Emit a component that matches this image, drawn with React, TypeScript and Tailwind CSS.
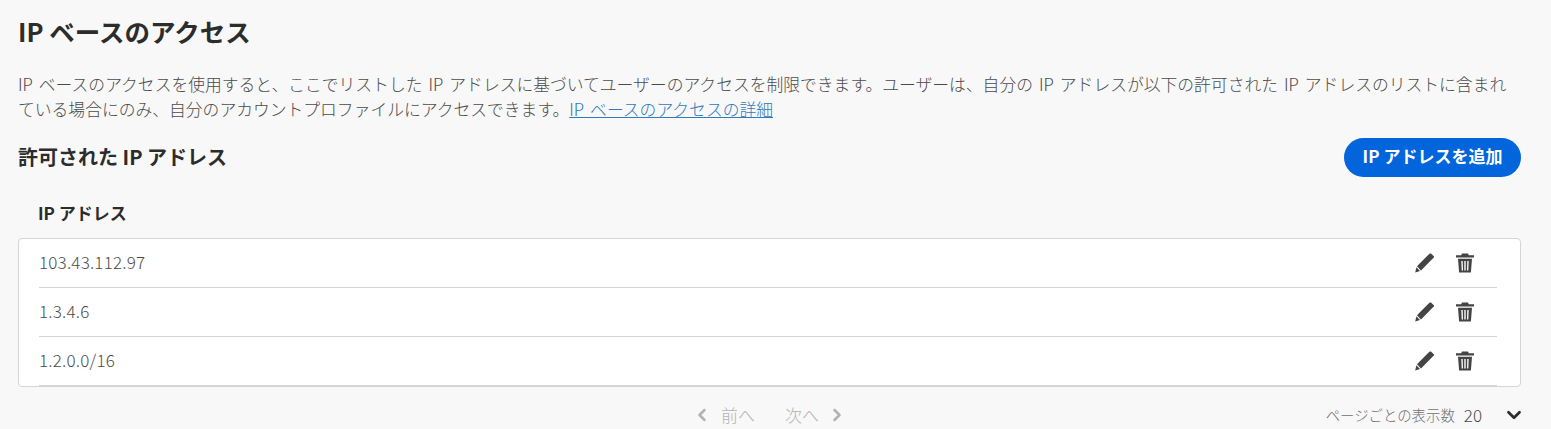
import React from 'react';
import { ChevronDown, ChevronLeft, ChevronRight } from 'lucide-react';

const rows = ['103.43.112.97', '1.3.4.6', '1.2.0.0/16'];

const PencilIcon: React.FC = () => (
    <svg viewBox="0 0 20 20" className="w-5 h-5 text-[#444444]" fill="currentColor">
        <path d="M12.6 2.6 L14.8 0.6 Q15.4 0.2 16 0.6 L18.8 3.2 Q19.2 3.8 18.8 4.4 L16.8 6.6 L6 17.4 L2 13.2 Z" />
        <path d="M1.4 14.2 L5 18 L0.2 19.6 Z" />
    </svg>
);

const TrashIcon: React.FC = () => (
    <svg viewBox="0 0 20 20" className="w-5 h-5 text-[#444444]" fill="currentColor">
        <path d="M7 0.5 H13 L13.8 2.2 H19 V4.6 H1 V2.2 H6.2 Z" />
        <path fillRule="evenodd" d="M3 5.8 H17 L15.9 19.5 H4.1 Z M6.3 8 L6.7 17.4 H8 L7.7 8 Z M9.3 8 V17.4 H10.7 V8 Z M12.3 8 L12 17.4 H13.3 L13.7 8 Z" />
    </svg>
);

export default function App() {
    return (
        <div className="h-[429px] overflow-hidden bg-[#f8f8f8] pl-[18px] pr-[30px] pt-[15px] text-[#2c2c2c] font-['Noto_Sans_CJK_JP','Noto_Sans',sans-serif]">
            <h1 className="text-[25.5px] leading-[32px] font-bold">IP ベースのアクセス</h1>

            <p className="mt-[25px] pr-[10px] text-[16.8px] leading-[25px] [word-spacing:2.3px] font-light text-[#4b4b4b]">
                IP ベースのアクセスを使用すると、ここでリストした IP アドレスに基づいてユーザーのアクセスを制限できます。ユーザーは、自分の IP アドレスが以下の許可された IP アドレスのリストに含まれている場合にのみ、自分のアカウントプロファイルにアクセスできます。
                <a className="text-[#2f7bbd] underline">IP ベースのアクセスの詳細</a>
            </p>

            <div className="mt-[16px] flex items-center justify-between">
                <h2 className="pb-[2px] text-xl font-bold">許可された IP アドレス</h2>
                <button className="h-[39px] w-[177px] rounded-full bg-[#0265dc] pb-[3px] text-white text-[17px] font-bold">IP アドレスを追加</button>
            </div>

            <div className="mt-[24px] pl-[20px] pb-[13px] text-[17px] leading-[24px] font-bold">IP アドレス</div>

            <div className="rounded border border-[#d5d5d5] bg-white pl-[20px] pr-[23px]">
                {rows.map((ip) => (
                    <div key={ip} className="flex h-[49px] items-center justify-between border-b border-[#d5d5d5] text-[17px] tracking-[0.2px] font-light text-[#4b4b4b]">
                        <span className="pb-[2px]">{ip}</span>
                        <div className="mr-[22px] flex items-center gap-[20px]">
                            <PencilIcon />
                            <TrashIcon />
                        </div>
                    </div>
                ))}
            </div>

            <div className="relative mt-[16px] flex h-[24px] items-center justify-center text-[17px] leading-[24px] font-light text-[#b3b3b3]">
                <div className="flex items-center">
                    <ChevronLeft className="w-5 h-5" strokeWidth={3} />
                    <span className="ml-[9px]">前へ</span>
                    <span className="ml-[30px]">次へ</span>
                    <ChevronRight className="ml-[8px] w-5 h-5" strokeWidth={3} />
                </div>
                <div className="absolute right-[-4px] top-0 flex items-center text-[#4b4b4b]">
                    <span className="text-[14.4px] text-[#707070]">ページごとの表示数</span>
                    <span className="ml-[9px]">20</span>
                    <ChevronDown className="ml-[21px] w-[22px] h-[22px] text-[#2c2c2c]" strokeWidth={3} />
                </div>
            </div>
        </div>
    );
}
